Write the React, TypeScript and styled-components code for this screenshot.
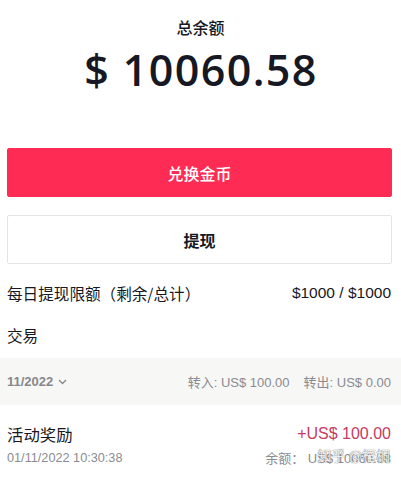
import React from "react";
import styled, { createGlobalStyle } from "styled-components";

const Global = createGlobalStyle`
  html, body { margin: 0; padding: 0; background: #ffffff; }
  body { font-family: "Liberation Sans", "Noto Sans CJK SC", sans-serif; color: #161823; }
`;

const Page = styled.div`
  width: 401px;
  height: 483px;
  overflow: hidden;
  display: flex;
  flex-direction: column;
`;

const Header = styled.div`
  display: flex;
  flex-direction: column;
  align-items: center;
  padding-top: 17px;
`;

const Title = styled.div`
  font-family: "Noto Sans CJK SC", sans-serif;
  font-size: 16px;
  line-height: 20px;
  font-weight: 500;
  color: #161823;
`;

const Amount = styled.div`
  margin-top: 11px;
  font-family: "Open Sans", "Liberation Sans", sans-serif;
  font-size: 43px;
  line-height: 44px;
  font-weight: 600;
  color: #161823;
  letter-spacing: 1.4px;
  padding-left: 1px;
`;

const Buttons = styled.div`
  display: flex;
  flex-direction: column;
  gap: 18px;
  padding: 0 9px 0 7px;
  margin-top: 56px;
`;

const Button = styled.div<{ $primary?: boolean }>`
  height: 49px;
  box-sizing: border-box;
  border-radius: 2px;
  display: flex;
  align-items: center;
  justify-content: center;
  font-size: 16px;
  font-family: "Noto Sans CJK SC", sans-serif;
  font-weight: ${(p) => (p.$primary ? 500 : 700)};
  color: ${(p) => (p.$primary ? "#ffffff" : "#161823")};
  background: ${(p) => (p.$primary ? "#fe2c55" : "#ffffff")};
  border: 1px solid ${(p) => (p.$primary ? "#fe2c55" : "#e4e4e6")};
`;

const Row = styled.div`
  display: flex;
  justify-content: space-between;
  align-items: center;
  padding: 0 10px 0 7px;
  height: 22px;
`;

const LimitRow = styled(Row)`
  margin-top: 18px;
`;

const Label = styled.div`
  font-family: "Noto Sans CJK SC", sans-serif;
  font-size: 15.6px;
  color: #161823;
`;

const Value = styled.div`
  font-size: 15.5px;
  color: #161823;
`;

const Section = styled(Row)`
  margin-top: 20px;
`;

const Band = styled.div`
  margin-top: 12px;
  height: 47px;
  background: #f7f7f5;
  display: flex;
  align-items: center;
  justify-content: space-between;
  padding: 0 10px 0 7px;
  font-size: 13px;
  color: #8a8b91;
`;

const Month = styled.div`
  display: flex;
  align-items: center;
  gap: 5px;
  font-weight: 700;
  color: #86878c;
`;

const Summary = styled.div`
  display: flex;
  gap: 14px;
`;

const Tx = styled.div`
  display: flex;
  flex-direction: column;
  padding: 17px 10px 0 7px;
  gap: 2px;
`;

const TxLine = styled.div`
  display: flex;
  justify-content: space-between;
  align-items: center;
`;

const TxTitle = styled.div`
  font-family: "Noto Sans CJK SC", sans-serif;
  font-size: 16.4px;
  color: #161823;
`;

const TxAmount = styled.div`
  font-size: 16px;
  color: #c73a62;
`;

const Sub = styled.div`
  font-size: 12.7px;
  color: #8a8b91;
`;

const Balance = styled.div`
  position: relative;
  font-size: 13px;
  color: #8a8b91;
`;

const Watermark = styled.div`
  position: absolute;
  right: 1px;
  top: -1px;
  font-family: "Noto Sans CJK SC", sans-serif;
  font-size: 14px;
  line-height: 16px;
  color: rgba(255, 255, 255, 0.9);
  text-shadow: 0 0 1px rgba(90, 90, 90, 0.9), 0 0 1px rgba(90, 90, 90, 0.6);
  white-space: nowrap;
`;

export default function App() {
  return (
    <Page>
      <Global />
      <Header>
        <Title>总余额</Title>
        <Amount>$ 10060.58</Amount>
      </Header>
      <Buttons>
        <Button $primary>兑换金币</Button>
        <Button>提现</Button>
      </Buttons>
      <LimitRow>
        <Label>每日提现限额（剩余/总计）</Label>
        <Value>$1000 / $1000</Value>
      </LimitRow>
      <Section>
        <Label>交易</Label>
      </Section>
      <Band>
        <Month>
          11/2022
          <svg width="9" height="6" viewBox="0 0 9 6">
            <path d="M1 1l3.5 3.5L8 1" fill="none" stroke="#86878c" strokeWidth="1.3" />
          </svg>
        </Month>
        <Summary>
          <span>转入: US$ 100.00</span>
          <span>转出: US$ 0.00</span>
        </Summary>
      </Band>
      <Tx>
        <TxLine>
          <TxTitle>活动奖励</TxTitle>
          <TxAmount>+US$ 100.00</TxAmount>
        </TxLine>
        <TxLine>
          <Sub>01/11/2022 10:30:38</Sub>
          <Balance>
            余额： US$ 10060.58
            <Watermark>知乎 @梧桐</Watermark>
          </Balance>
        </TxLine>
      </Tx>
    </Page>
  );
}
